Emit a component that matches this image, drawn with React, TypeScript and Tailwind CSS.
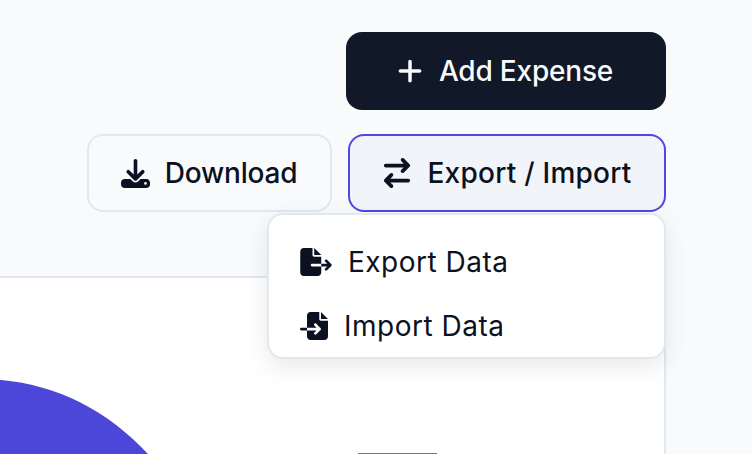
import { FaArrowRightArrowLeft, FaDownload, FaFileExport, FaFileImport, FaPlus } from "react-icons/fa6";

export default function App() {
  return (
    <div className="relative flex h-[454px] w-[752px] flex-col overflow-hidden bg-slate-50 font-['Inter',sans-serif] text-[#0b1120]">
      <div className="flex flex-col items-end gap-6 pr-[86px] pt-8">
        <button className="flex h-[78px] w-[320px] items-center justify-center gap-[15px] rounded-2xl bg-[#111827] pr-[3px] text-[28px] font-[550] tracking-[-0.2px] text-slate-50">
          <FaPlus className="h-7 w-7" />
          Add Expense
        </button>
        <div className="flex gap-4">
          <button className="flex h-[78px] w-[245px] items-center justify-center gap-[15px] rounded-2xl border-2 border-slate-200 pr-[1px] text-[28px] font-[550] tracking-[-0.2px]">
            <FaDownload className="h-[29px] w-[29px]" />
            Download
          </button>
          <button className="flex h-[78px] w-[318px] items-center justify-center gap-[15px] rounded-2xl border-2 border-[#4f46e5] bg-slate-100 text-[28px] font-[550] tracking-[0.25px]">
            <FaArrowRightArrowLeft className="h-[30px] w-[30px]" />
            Export / Import
          </button>
        </div>
      </div>
      <div className="mr-[86px] mt-16 flex-1 border-r-2 border-t-2 border-slate-200 bg-white">
        <svg className="h-[176px] w-[664px]" viewBox="0 0 664 176">
          <path d="M0 176V102H1C58 107 108 133 148 176Z" fill="#4c46d9" />
          <rect x="358" y="175" width="79" height="1" fill="#6b66e0" />
        </svg>
      </div>
      <div className="absolute left-[267px] top-[213px] flex h-[146px] w-[399px] flex-col gap-[22px] rounded-2xl border-2 border-slate-200 bg-white pl-[31px] pt-[26px] text-[28px] tracking-[0.5px] shadow-[0_8px_24px_rgba(0,0,0,0.09)]">
        <div className="flex h-[42px] items-center gap-[16px]">
          <FaFileExport className="h-[28px] w-[32px]" />
          Export Data
        </div>
        <div className="flex h-[42px] items-center gap-[16px]">
          <FaFileImport className="h-[28px] w-[28px]" />
          Import Data
        </div>
      </div>
    </div>
  );
}
